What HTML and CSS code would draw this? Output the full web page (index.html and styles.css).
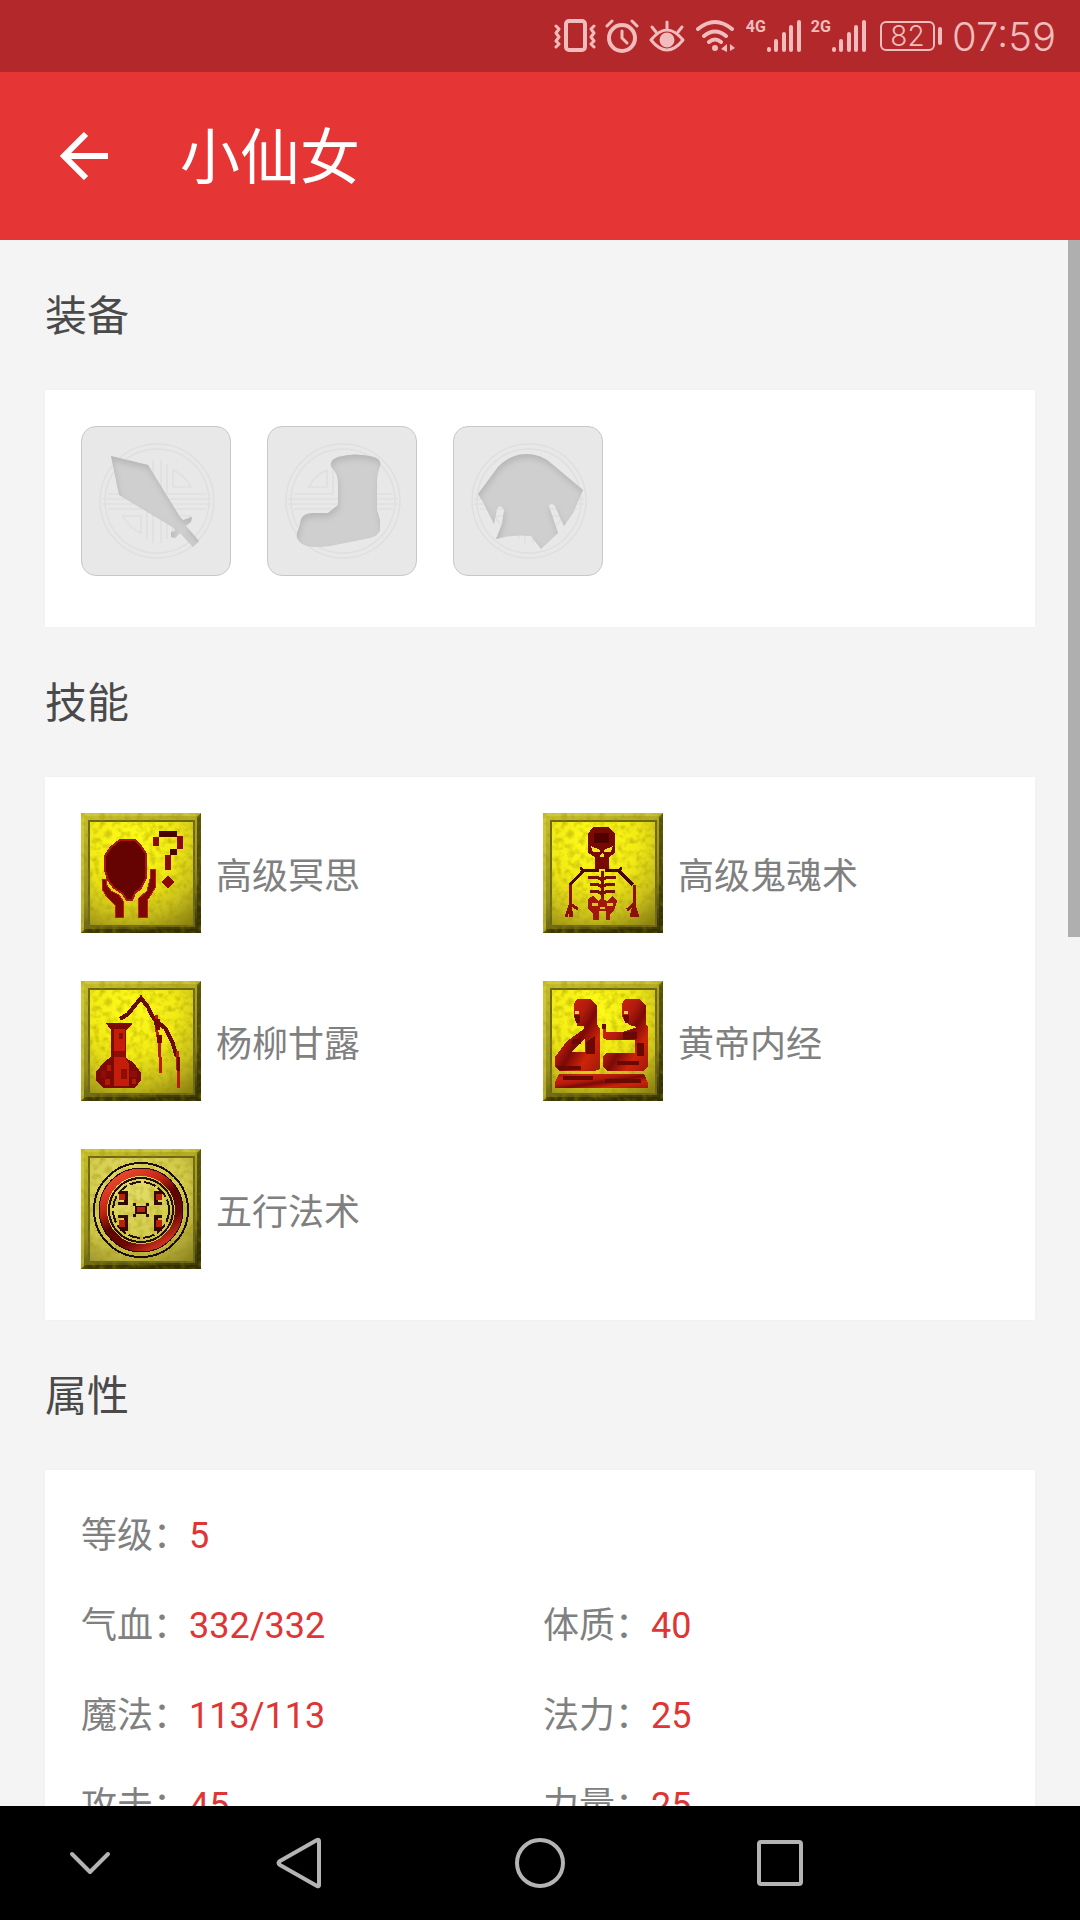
FILE: index.html
```html
<!DOCTYPE html>
<html lang="zh-CN">
<head>
  <meta charset="UTF-8" />
  <meta name="viewport" content="width=device-width, initial-scale=1.0" />
  <title>小仙女</title>
  <link rel="stylesheet" href="styles.css">
</head>
<body>
  <!-- shared shapes -->
  <svg class="defs" width="0" height="0" aria-hidden="true">
    <defs>
      <radialGradient id="gold" cx="0.4" cy="0.2" r="0.95">
        <stop offset="0" stop-color="#fffc18" />
        <stop offset="0.45" stop-color="#f2ea14" />
        <stop offset="0.75" stop-color="#c8be1c" />
        <stop offset="1" stop-color="#8c8212" />
      </radialGradient>
      <radialGradient id="sand" cx="0.4" cy="0.3" r="0.9">
        <stop offset="0" stop-color="#e6e06c" />
        <stop offset="0.6" stop-color="#d0c848" />
        <stop offset="1" stop-color="#8a8224" />
      </radialGradient>
      <linearGradient id="rim" x1="0.3" y1="0" x2="0.6" y2="1">
        <stop offset="0" stop-color="#c4bc28" />
        <stop offset="0.6" stop-color="#989020" />
        <stop offset="1" stop-color="#423e08" />
      </linearGradient>
      <linearGradient id="ember" x1="0" y1="0" x2="1" y2="1">
        <stop offset="0" stop-color="#a41814" />
        <stop offset="0.2" stop-color="#d02010" />
        <stop offset="0.4" stop-color="#b01c0c" />
        <stop offset="0.55" stop-color="#7c0a06" />
        <stop offset="0.75" stop-color="#cc240a" />
        <stop offset="1" stop-color="#a01a08" />
      </linearGradient>
      <linearGradient id="ring" x1="0.2" y1="0" x2="0.8" y2="1">
        <stop offset="0" stop-color="#ee4a30" />
        <stop offset="0.3" stop-color="#c42416" />
        <stop offset="0.5" stop-color="#5a0602" />
        <stop offset="0.75" stop-color="#6a0804" />
        <stop offset="1" stop-color="#e03a22" />
      </linearGradient>
      <filter id="grain" x="0" y="0" width="1" height="1">
        <feTurbulence type="fractalNoise" baseFrequency="0.16" numOctaves="2" seed="4" />
        <feColorMatrix values="0 0 0 0 0.3  0 0 0 0 0.26  0 0 0 0 0  1 0 0 0 -0.42" />
      </filter>
      <filter id="inset" x="-0.1" y="-0.1" width="1.2" height="1.2">
        <feOffset in="SourceAlpha" dx="1" dy="4" result="moved" />
        <feGaussianBlur in="moved" stdDeviation="3" result="soft" />
        <feComposite in="SourceAlpha" in2="soft" operator="out" result="edge" />
        <feColorMatrix in="edge" values="0 0 0 0 0.45  0 0 0 0 0.45  0 0 0 0 0.45  0 0 0 0.9 0" result="shade" />
        <feMerge>
          <feMergeNode in="SourceGraphic" />
          <feMergeNode in="shade" />
        </feMerge>
      </filter>
      <symbol id="frame" viewBox="0 0 120 120">
        <rect width="120" height="120" fill="url(#rim)" />
        <path d="M0 0H120L117 3H3V118L0 120Z" fill="#d4cc40" opacity="0.7" />
        <path d="M120 0V120H0L4 116H116V4Z" fill="#2e2a02" opacity="0.7" />
      </symbol>
      <symbol id="plate" viewBox="0 0 120 120">
        <use href="#frame" />
        <rect x="8" y="8" width="105" height="105" fill="url(#gold)" stroke="#6c661c" stroke-width="2" />
        <rect width="120" height="120" filter="url(#grain)" />
      </symbol>
      <symbol id="plate-dim" viewBox="0 0 120 120">
        <use href="#frame" />
        <rect x="8" y="8" width="105" height="105" fill="url(#sand)" stroke="#6c661c" stroke-width="2" />
        <rect width="120" height="120" filter="url(#grain)" />
      </symbol>
      <symbol id="emblem" viewBox="0 0 150 150">
        <g fill="none" stroke="#dfdfdf" stroke-width="1.5">
          <circle cx="76" cy="75" r="57" />
          <circle cx="76" cy="75" r="52" />
          <path d="M21 73H72V34M80 34V73H131M21 78H72V117M80 117V78H131" />
          <path d="M27 68H66V38M86 38V68H125M27 83H66V113M86 113V83H125" />
          <path d="M42 61H60V44Q48 49 42 61ZM92 44V61H110Q104 49 92 44ZM42 90H60V107Q48 102 42 90ZM92 107V90H110Q104 102 92 107Z" />
        </g>
      </symbol>
      <symbol id="signal" viewBox="0 0 36 34">
        <path d="M3 30V31M10 22V31M18 15V31M25 8V31M33 3V31" fill="none" stroke="currentColor" stroke-width="4" stroke-linecap="round" />
      </symbol>
    </defs>
  </svg>

  <header>
    <div class="status-bar">
      <svg width="42" height="36" viewBox="0 0 42 36" fill="none" stroke="currentColor" stroke-width="3" stroke-linecap="round" stroke-linejoin="round">
        <rect x="12" y="3" width="19" height="29" rx="3" stroke-width="4" />
        <path d="M2 8L5 11 2 15 5 19 2 23 5 26 2 29M40 8L37 11 40 15 37 19 40 23 37 26 40 29" />
      </svg>
      <svg width="34" height="36" viewBox="0 0 34 36" fill="none" stroke="currentColor" stroke-width="3" stroke-linecap="round">
        <circle cx="17" cy="20" r="13" stroke-width="4" />
        <path d="M17 13V20L22 25M2 8L7 3M27 3L32 8" stroke-width="3" />
      </svg>
      <svg width="38" height="36" viewBox="0 0 38 36" fill="none" stroke="currentColor" stroke-width="3" stroke-linecap="round">
        <path d="M3 22Q19 2 35 22Q19 42 3 22Z" stroke-linejoin="round" />
        <circle cx="19" cy="22" r="6" fill="currentColor" />
        <path d="M19 4V10M4 9L8 14M34 9L30 14" />
      </svg>
      <svg width="42" height="36" viewBox="0 0 42 36" fill="none" stroke="currentColor" stroke-width="4" stroke-linecap="round">
        <path d="M3 11Q20 -3 37 11M9 18Q20 9 31 18M14 24Q20 19 26 24" />
        <circle cx="20" cy="30" r="3" fill="currentColor" stroke="none" />
        <path d="M32 26V34L26 31ZM35 26L40 30 35 33Z" fill="currentColor" stroke="none" />
      </svg>
      <span class="network"><small>4G</small><svg width="36" height="34"><use href="#signal" /></svg></span>
      <span class="network"><small>2G</small><svg width="36" height="34"><use href="#signal" /></svg></span>
      <span class="battery">82</span>
      <span class="clock">07:59</span>
    </div>
    <div class="app-bar">
      <button class="back" aria-label="返回">
        <svg width="48" height="48" viewBox="0 0 48 48" fill="none" stroke="currentColor" stroke-width="6">
          <path d="M48 24H5M26 2L4 24 26 46" />
        </svg>
      </button>
      <h1>小仙女</h1>
    </div>
  </header>

  <main>
    <div class="scroll">
      <h2>装备</h2>
      <section class="card equips">
        <svg class="equip" viewBox="1 1 148 148">
          <use href="#emblem" width="150" height="150" />
          <path d="M30 30L67 39 99 91 102 94 111 91 110 96 105 100 118 115 112 121 99 107 94 112 90 111 90 106 94 105 93 102 38 69Z" fill="#cfcfcf" filter="url(#inset)" />
        </svg>
        <svg class="equip" viewBox="1 1 148 148">
          <use href="#emblem" width="150" height="150" />
          <path d="M64 37Q65 33 71 31 88 26 107 31 115 34 113 40 110 48 110 55V84L113 94V104Q112 109 103 112L63 120Q50 122 40 120 32 117 30 112 29 107 32 102L34 93Q37 87 46 87H61L71 79V57Q71 49 66 43 63 40 64 37Z" fill="#cfcfcf" filter="url(#inset)" />
        </svg>
        <svg class="equip" viewBox="1 1 148 148">
          <use href="#emblem" width="150" height="150" />
          <path d="M25 68L45 41Q57 28 74 28 88 28 99 38L130 64 120 87 111 100 102 80Q98 75 96 80L105 107 88 123 78 110Q60 108 43 113L49 98 51 84Q47 77 44 83L41 98 30 76Z" fill="#cfcfcf" filter="url(#inset)" />
        </svg>
      </section>

      <h2>技能</h2>
      <section class="card skills">
        <div class="skill">
          <svg class="skill-icon" viewBox="0 0 120 120">
            <use href="#plate" />
            <g shape-rendering="crispEdges">
              <path d="M39 27H54L60 33 65 41V65L60 75 54 80 51 87H46L41 80 33 75 27 67 24 57V43L30 34Z" fill="#640302" stroke="#a81410" stroke-width="2" />
              <path d="M21 66H25V71L30 78 38 82 42 88V104H34V92L26 84 21 76ZM70 56H74V75L66 88V104H57V86L66 78 69 66Z" fill="#7a0804" stroke="#c41c0c" />
              <path d="M78 18H96V24H78ZM89 36H96V42H89Z" fill="#4a0200" />
              <path d="M72 24H78V33H72ZM96 23H102V36H96ZM84 42H90V57H84ZM87 62L93 69 87 76 81 69Z" fill="#8c0a06" />
            </g>
          </svg>
          <span>高级冥思</span>
        </div>
        <div class="skill">
          <svg class="skill-icon" viewBox="0 0 120 120">
            <use href="#plate" />
            <g shape-rendering="crispEdges">
              <path d="M50 14H66L72 21V40L66 44V56H52V44L45 40V21Z" fill="#780a06" />
              <path d="M51 20H66V30H51Z" fill="#500200" />
              <path d="M48 33L57 37V39H50ZM70 33L61 37V39H68ZM57 42L59 40 61 42V44H57Z" fill="#f4e420" />
              <path d="M37 55L40 57H56M79 55L76 57H62M40 58L27 72M76 58L90 72" fill="none" stroke="#4c0602" stroke-width="3" />
              <path d="M27 72V104M91 72V104M27 91L35 96M91 91L84 97M23 104L27 92 29 104M95 104L91 92 88 104" fill="none" stroke="#8c1008" stroke-width="3" />
              <path d="M59 58V88M45 64H54L59 67 64 64H73M47 71H54L59 74 64 71H72M47 78H54L59 81 64 78H72" fill="none" stroke="#781004" stroke-width="3" />
              <path d="M45 86L50 83 55 88 59 85 64 88 69 83 74 88 71 98 67 101V107H63V98H56V107H50V101L45 96Z" fill="#a0180a" />
              <path d="M49 90H55V93H49ZM64 90H70V93H64ZM57 94H62V96H57Z" fill="#d8c81c" />
            </g>
          </svg>
          <span>高级鬼魂术</span>
        </div>
        <div class="skill">
          <svg class="skill-icon" viewBox="0 0 120 120">
            <use href="#plate" />
            <g shape-rendering="crispEdges">
              <path d="M25 42H51V44L45 49V77L53 82 60 92V99L54 107H22L15 99V91L24 80 30 76V49Z" fill="#7c0904" />
              <path d="M33 48H44V76L48 83V105H33Z" fill="#c41e0a" />
              <path d="M33 70H44V76H33ZM38 52H42V58H38ZM40 88H46V98H40ZM20 90H25V97H20ZM49 90H56V96H49Z" fill="#8c0e06" />
              <path d="M26 84H30V90H26ZM24 98H29V104H24ZM51 98H55V103H51Z" fill="#b01a0a" />
              <path d="M39 38L47 33 60 17 67 26 73 38 84 47 91 60 96 76" fill="none" stroke="#6a0a04" stroke-width="4" />
              <path d="M75 34V46L78 60 80 92M96 70L98 107" fill="none" stroke="#b81c0a" stroke-width="3" />
              <path d="M72 38H79V49H75ZM76 54H81V62H76ZM96 76H99V90H96Z" fill="#740804" />
            </g>
          </svg>
          <span>杨柳甘露</span>
        </div>
        <div class="skill">
          <svg class="skill-icon" viewBox="0 0 120 120">
            <use href="#plate" />
            <g shape-rendering="crispEdges">
              <path d="M34 18H48L54 25V43L57 48V88L52 90H16L12 85V76L24 60 41 48V45H34V40L31 36V23ZM28 71H42V58Z" fill="url(#ember)" fill-rule="evenodd" />
              <path d="M82 18H97L103 25V44L105 46V85L101 90H64L60 86V75L64 72H92V59H64L60 57V43H63V51H80L94 46 86 44 82 40 79 35V23Z" fill="url(#ember)" />
              <path d="M16 93H101L105 102V107H12V101Z" fill="url(#ember)" />
              <path d="M31 34H37V42H33ZM80 34H86V42H82ZM30 58H38V63H28ZM59 43H63V48H59ZM80 51H94V58H80ZM43 61L52 55V73H43ZM94 62H101V75H94ZM14 85H38V89H16ZM74 80H96V84H74ZM20 95H50V99H20ZM62 98H98V102H62Z" fill="#6a0804" />
              <path d="M32 30H36V33H32ZM81 30H85V33H81Z" fill="#ffd83c" />
            </g>
          </svg>
          <span>黄帝内经</span>
        </div>
        <div class="skill">
          <svg class="skill-icon" viewBox="0 0 120 120">
            <use href="#plate-dim" />
            <g fill="none" shape-rendering="crispEdges">
              <circle cx="60" cy="61" r="47" stroke="#1c0c02" stroke-width="2" />
              <circle cx="60" cy="61" r="38" stroke="url(#ring)" stroke-width="8" />
              <circle cx="60" cy="61" r="42" stroke="#2c0802" stroke-width="1" />
              <circle cx="60" cy="61" r="32" stroke="#241002" stroke-width="2" />
              <circle cx="60" cy="61" r="28" stroke="#241002" stroke-width="2" stroke-dasharray="12 3" />
            </g>
            <g shape-rendering="crispEdges">
              <path d="M52 54H55V57H65V54H68V57H66V65H68V68H65V65H55V68H52V65H54V57H52ZM39 42H47V56H37V53H43V48H39ZM81 42H73V56H81V53H77V48H81ZM39 82H47V66H37V69H43V75H39ZM81 82H73V66H81V69H77V75H81Z" fill="#320a02" />
              <path d="M56 58H64V63H56ZM38 45H44V51H38ZM75 45H81V51H75ZM38 71H44V78H38ZM75 71H81V78H75Z" fill="#b82010" />
            </g>
          </svg>
          <span>五行法术</span>
        </div>
      </section>

      <h2>属性</h2>
      <dl class="card attrs">
        <div class="attr wide"><dt>等级：</dt><dd>5</dd></div>
        <div class="attr"><dt>气血：</dt><dd>332/332</dd></div>
        <div class="attr"><dt>体质：</dt><dd>40</dd></div>
        <div class="attr"><dt>魔法：</dt><dd>113/113</dd></div>
        <div class="attr"><dt>法力：</dt><dd>25</dd></div>
        <div class="attr"><dt>攻击：</dt><dd>45</dd></div>
        <div class="attr"><dt>力量：</dt><dd>25</dd></div>
      </dl>
    </div>
    <div class="scroll-thumb"></div>
  </main>

  <nav class="nav-bar">
    <button aria-label="隐藏导航栏">
      <svg width="48" height="48" viewBox="0 0 48 48"><path d="M6 15L24 33 42 15" /></svg>
    </button>
    <button aria-label="返回">
      <svg width="48" height="52" viewBox="0 0 48 52"><path d="M43 4V48Q43 50 41 49L4 28Q1 26 4 24L41 3Q43 2 43 4Z" /></svg>
    </button>
    <button aria-label="主屏幕">
      <svg width="52" height="52" viewBox="0 0 52 52"><circle cx="26" cy="26" r="23" /></svg>
    </button>
    <button aria-label="最近任务">
      <svg width="52" height="52" viewBox="0 0 52 52"><rect x="5" y="5" width="42" height="42" rx="2" /></svg>
    </button>
  </nav>
</body>
</html>
```
FILE: styles.css
```css
:root {
  --red: #e53535;
  --red-dark: #b3282b;
  --status: #f0bcbc;
  --bg: #f4f4f4;
}
* { box-sizing: border-box; }
body {
  font-family: Roboto, "Noto Sans CJK SC", sans-serif;
  display: flex;
  flex-direction: column;
  height: 100vh;
  margin: 0;
  background-color: var(--bg);
  color: #808080;
}
.defs { position: absolute; }
button {
  display: flex;
  align-items: center;
  justify-content: center;
  padding: 0;
  border: none;
  background: none;
  color: inherit;
  cursor: pointer;
}

/* status bar */
.status-bar {
  display: flex;
  align-items: center;
  justify-content: flex-end;
  gap: 9px;
  height: 72px;
  padding-right: 24px;
  background-color: var(--red-dark);
  color: var(--status);
  font-family: Inter, sans-serif;
  font-weight: 300;
}
.network { display: flex; align-items: flex-start; }
.network small {
  font-family: "Liberation Sans Narrow", Roboto, sans-serif;
  font-size: 16px;
  line-height: 16px;
  font-weight: bold;
}
.battery {
  position: relative;
  margin: 0 8px 0 4px;
  width: 55px;
  border: 2px solid;
  border-radius: 6px;
  font-size: 28px;
  line-height: 26px;
  text-align: center;
}
.battery::after {
  content: "";
  position: absolute;
  right: -9px;
  top: 4px;
  width: 4px;
  height: 18px;
  border-radius: 2px;
  background-color: currentColor;
}
.clock { font-size: 40px; }

/* app bar */
.app-bar {
  display: flex;
  align-items: center;
  gap: 72px;
  height: 168px;
  padding: 0 60px;
  background-color: var(--red);
  color: #fff;
}
h1 {
  margin: 0;
  padding-bottom: 8px;
  font-size: 60px;
  font-weight: 400;
}

/* content */
main {
  position: relative;
  flex: 1;
  min-height: 0;
}
.scroll {
  height: 100%;
  padding: 0 45px;
  overflow: hidden;
}
.scroll-thumb {
  position: absolute;
  top: 0;
  right: 0;
  width: 12px;
  height: 44.5%;
  background-color: #afafaf;
}
h2 {
  margin: 0;
  padding-top: 4px;
  font-size: 42px;
  line-height: 146px;
  font-weight: 400;
  color: #4a4a4a;
}
.card {
  margin: 0;
  padding: 36px 30px 51px 36px;
  background-color: #fff;
  box-shadow: 0 0 3px rgba(0,0,0,0.03);
}
.equips { display: flex; gap: 36px; }
.equip {
  width: 150px;
  height: 150px;
  border: 1px solid #c8c8c8;
  border-radius: 15px;
  background-color: #e8e8e8;
}
.skills, .attrs {
  display: grid;
  grid-template-columns: 1fr 1fr;
}
.skills { row-gap: 48px; }
.skill {
  display: flex;
  align-items: center;
  gap: 15px;
  font-size: 36px;
}
.skill-icon { width: 120px; height: 120px; }
.attrs { row-gap: 30px; }
.attr {
  display: flex;
  font-size: 36px;
  line-height: 60px;
}
.wide { grid-column: 1 / -1; }
.attr dd { margin: 0; color: #e03535; }

/* system navigation */
.nav-bar {
  display: grid;
  grid-template-columns: 3fr 4fr 4fr 4fr 3fr;
  height: 114px;
  background-color: #000;
  color: #b4b4b4;
}
.nav-bar svg {
  fill: none;
  stroke: currentColor;
  stroke-width: 4;
  stroke-linecap: round;
  stroke-linejoin: round;
}
```
